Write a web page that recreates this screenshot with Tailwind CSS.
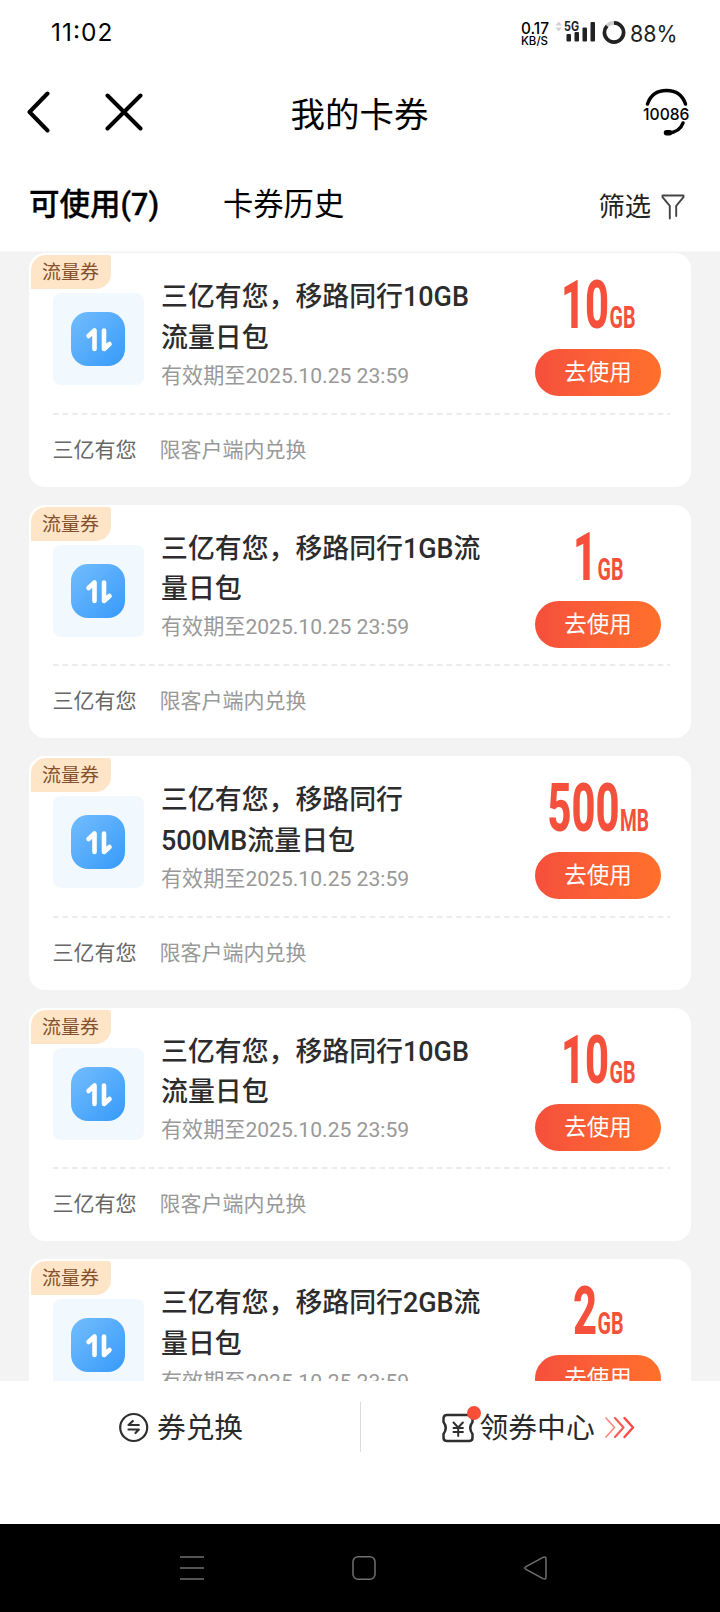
<!DOCTYPE html>
<html lang="zh-CN">
<head>
<meta charset="utf-8">
<title>我的卡券</title>
<script src="https://cdn.jsdelivr.net/npm/@tailwindcss/browser@4"></script>
</head>
<body class="bg-white">
<div class="flex h-[1612px] w-[720px] flex-col overflow-hidden bg-white font-['Roboto','Noto_Sans_CJK_SC',sans-serif] text-black">

  <!-- status bar -->
  <header class="flex h-[66px] shrink-0 items-center justify-between pr-[43px] pl-[51px] font-['Inter',sans-serif]">
    <svg class="h-[26px] w-[64px] overflow-visible" viewBox="0 0 64 26"><text x="0" y="21" font-size="24.500" font-weight="400" textLength="61.500">11:02</text></svg>
    <div class="flex h-[26px] items-center text-[#222]">
      <svg class="h-[26px] w-[105px] overflow-visible" viewBox="0 0 105 26" fill="#222">
        <text x="0" y="14" font-size="15.500" font-weight="500" fill="#000" textLength="28" lengthAdjust="spacingAndGlyphs">0.17</text>
        <text x="0" y="24.500" font-size="11.500" font-weight="500" fill="#000" textLength="27" lengthAdjust="spacingAndGlyphs">KB/S</text>
        <path d="M34.500 5.500l3.200-4 3.200 4zM34.500 7.500l3.200 4 3.200-4z" fill="#d2d2d2"/>
        <text x="43" y="10.500" font-size="12.500" font-weight="700" textLength="15" lengthAdjust="spacingAndGlyphs">5G</text>
        <rect x="45.500" y="14" width="4.500" height="7.500" rx="1"/>
        <rect x="53.500" y="12" width="4.500" height="9.500" rx="1"/>
        <rect x="61.500" y="7.500" width="4.500" height="14" rx="1"/>
        <rect x="69.500" y="2" width="4.500" height="19.500" rx="1"/>
        <circle cx="93" cy="12.500" r="9.600" fill="none" stroke="#ccc" stroke-width="3.600"/>
        <circle cx="93" cy="12.500" r="9.600" fill="none" stroke="#222" stroke-width="3.600" pathLength="100" stroke-dasharray="87 13" transform="rotate(-90 93 12.500)"/>
      </svg>
      <svg class="ml-[4px] h-[26px] w-[47px] overflow-visible" viewBox="0 0 47 26" fill="#222"><text x="0" y="21.500" font-size="23.500" textLength="47.500" lengthAdjust="spacingAndGlyphs">88%</text></svg>
    </div>
  </header>

  <!-- title bar -->
  <div class="flex h-[94px] shrink-0 items-center pl-[26px]">
    <svg class="h-[44px] w-[120px]" viewBox="0 0 120 44" fill="none" stroke="#000" stroke-width="4" stroke-linecap="round" stroke-linejoin="round">
      <path d="M21.500 2.500L3.500 21 21.500 39.500M81.500 4.500l33 33M114.500 4.500l-33 33"/>
    </svg>
    <h1 class="mt-[3px] w-[374px] pl-[144.5px] text-[34.5px] leading-[50px] font-normal">我的卡券</h1>
    <svg class="ml-[123px] h-[50px] w-[48px] overflow-visible" viewBox="0 0 48 50" fill="none" stroke="#000" stroke-width="3.500" stroke-linecap="round">
      <path d="M4.500 16C7.500 7 14.500 2.500 23.500 2.500s16 4.500 19 13.500M40 35c-2 5.500-7 9.500-14.500 9.800"/>
      <path d="M23.500 44.700h3" stroke-width="5.500"/>
      <text x="0" y="31.500" font-family="Inter" font-size="16.500" font-weight="500" fill="#000" stroke="none" textLength="46.500" lengthAdjust="spacingAndGlyphs">10086</text>
    </svg>
  </div>

  <!-- tabs -->
  <nav class="flex h-[92px] shrink-0 items-center border-b border-[#f8f8f8] pr-[35px] pb-[1px] pl-[29px]">
    <span class="w-[194px] text-[30.5px] leading-[44px] font-medium [-webkit-text-stroke:0.3px_#000]">可使用(7)</span>
    <span class="text-[30.3px] leading-[44px]">卡券历史</span>
    <span class="mt-[3px] ml-auto text-[26.3px] leading-10 text-[#222]">筛选</span>
    <svg class="mt-[3px] ml-[10px] h-[26px] w-[24px]" viewBox="0 0 24 26" fill="none" stroke="#444" stroke-width="1.900" stroke-linejoin="round" stroke-linecap="round">
      <path d="M8.800 24.500V11.800L1.500 3.200V1.500h21v1.700l-7.300 8.600V22"/>
    </svg>
  </nav>

  <!-- coupon list -->
  <main id="list" class="flex h-[1129px] shrink-0 flex-col gap-[18px] overflow-hidden bg-[#f3f3f3] px-[29px] pt-[1.3px]"></main>

  <!-- bottom actions -->
  <footer class="flex h-[143px] shrink-0 bg-white pt-[21px]">
    <div class="flex h-[50px] w-[361px] items-center border-r border-[#dcdcdc] pl-[118px] text-[#2a2a2a]">
      <svg class="h-[32px] w-[32px]" viewBox="0 0 32 32" fill="none" stroke="#2f2f2f" stroke-width="2.200" stroke-linecap="round" stroke-linejoin="round">
        <circle cx="15.700" cy="16.500" r="13.500"/>
        <path d="M20.800 14H10.500L14.800 10M10.500 18.500H20.800L17.500 22"/>
      </svg>
      <span class="mt-[2px] ml-[7px] text-[28.7px] leading-[44px]">券兑换</span>
    </div>
    <div class="flex h-[50px] items-center pl-[79.5px] text-[#2a2a2a]">
      <div class="relative h-[30px] w-[34px]">
        <svg class="mt-[0.5px] h-[30px] w-[34px]" viewBox="0 0 34 30" fill="none" stroke="#2f2f2f" stroke-width="2.500" stroke-linecap="round" stroke-linejoin="round">
          <path d="M6 2h22q3.500 0 3.500 3.500V9q-4.500 6 0 12v3.500q0 3.500-3.500 3.500H6q-3.500 0-3.500-3.500V21q4.500-6 0-12V5.500Q2.500 2 6 2z"/>
          <path d="M12.500 9.500l4.700 5 4.700-5M17.200 14.500v8.500M12.500 15h9.400M12.500 19h9.400" stroke-width="2"/>
        </svg>
        <i class="absolute -top-[6px] left-[26.5px] h-[14px] w-[14px] rounded-full bg-[#f94f38]"></i>
      </div>
      <span class="mt-[2px] ml-[5px] text-[28.8px] leading-[44px]">领券中心</span>
      <svg class="ml-[9px] h-[24px] w-[32px]" viewBox="0 0 32 24" fill="none" stroke="#f94b40" stroke-linejoin="round" stroke-linecap="round">
        <path d="M2 3l8.500 9.500L2 22" stroke-width="1.700" opacity=".65"/>
        <path d="M11 3l8.500 9.500L11 22" stroke-width="2.200" opacity=".9"/>
        <path d="M20.500 3l8.500 9.500-8.500 9.500" stroke-width="2.400"/>
      </svg>
    </div>
  </footer>

  <!-- system navigation -->
  <div class="flex h-[88px] shrink-0 items-start bg-black pt-[31px] pl-[179px]">
    <svg class="h-[26px] w-[370px]" viewBox="0 0 370 26" fill="none" stroke="#707070" stroke-width="1.500" stroke-linejoin="round">
      <path d="M1 2h24M1 13h24M1 24h24"/>
      <rect x="174" y="1.700" width="22" height="22.500" rx="5"/>
      <path d="M347 11.600q-2.500 1.400 0 2.800l17 9.200q3 1.300 3-1.500V4q0-3-3-1.600z"/>
    </svg>
  </div>
</div>

<template id="card">
  <article class="h-[233.5px] shrink-0 rounded-[16px] bg-white pt-[2px] pr-[21px] pl-[2px]">
    <div class="h-[34px] w-[80px] rounded-tl-[15px] rounded-br-[15px] rounded-tr-[3px] bg-[#ffe5c8] pl-[11px] text-[19px] leading-[35px] text-[#84512c]">流量券</div>
    <div class="flex h-[123.5px] pl-[21.5px]">
      <div class="mt-[4px] flex h-[92px] w-[91.500px] shrink-0 items-center justify-center rounded-[8px] bg-[#f1f9ff]">
        <div class="h-[54px] w-[54px] rounded-[17px] bg-linear-to-br from-[#72bdfd] to-[#349af9]">
          <svg class="h-[54px] w-[54px]" viewBox="0 0 54 54" fill="none" stroke="#fff" stroke-width="4.600" stroke-linecap="round" stroke-linejoin="round">
            <path d="M17.500 24l6-5.500V37M33 18.500V37l5.500-5"/>
          </svg>
        </div>
      </div>
      <div class="-mt-[12px] ml-[17px] w-[340px]">
        <h2 class="text-[26.9px] leading-[40.3px] font-medium text-[#2c2c2c]"><span data-a></span><br><span data-b></span></h2>
        <p class="text-[21.1px] leading-[36px] text-[#999]">有效期至2025.10.25 23:59</p>
      </div>
      <div class="-mt-[17px] ml-auto mr-[9px] flex w-[126px] flex-col items-center">
        <svg class="h-[60px] w-[126px] shrink-0 overflow-visible" viewBox="0 0 126 60" fill="#f4503b" font-family="Roboto">
          <text data-n y="56" font-size="66" font-weight="800" lengthAdjust="spacingAndGlyphs"></text>
          <text data-u y="56" font-size="31" font-weight="700" lengthAdjust="spacingAndGlyphs"></text>
        </svg>
        <button class="mt-[17px] h-[47px] w-[126px] shrink-0 rounded-full bg-linear-to-r from-[#f64f3c] to-[#ff702b] pb-[1px] text-[22.5px] leading-[46px] text-white">去使用</button>
      </div>
    </div>
    <svg class="ml-[22px] h-[2px] w-[617px]" viewBox="0 0 617 2"><path d="M0 1h617" stroke="#e6e6e6" stroke-width="1.300" stroke-dasharray="5.600 4"/></svg>
    <div class="mt-[17px] flex gap-[23px] pl-[21.5px] text-[21px] leading-[36px]">
      <span class="text-[#666]">三亿有您</span><span class="text-[#999]">限客户端内兑换</span>
    </div>
  </article>
</template>
<script>
  const coupons = [
    ['三亿有您，移路同行10GB', '流量日包', '10', 'GB'],
    ['三亿有您，移路同行1GB流', '量日包', '1', 'GB'],
    ['三亿有您，移路同行', '500MB流量日包', '500', 'MB'],
    ['三亿有您，移路同行10GB', '流量日包', '10', 'GB'],
    ['三亿有您，移路同行2GB流', '量日包', '2', 'GB'],
  ];
  for (const [a, b, n, u] of coupons) {
    const c = document.getElementById('card').content.cloneNode(true);
    c.querySelector('[data-a]').textContent = a;
    c.querySelector('[data-b]').textContent = b;
    const N = c.querySelector('[data-n]'), U = c.querySelector('[data-u]');
    const nw = n.length * 24, uw = u === 'MB' ? 29 : 26;
    const x = 63 - (nw + uw) / 2;
    N.textContent = n; N.setAttribute('x', x); N.setAttribute('textLength', nw);
    U.textContent = u; U.setAttribute('x', x + nw + 0.5); U.setAttribute('textLength', uw);
    document.getElementById('list').append(c);
  }
</script>
</body>
</html>
